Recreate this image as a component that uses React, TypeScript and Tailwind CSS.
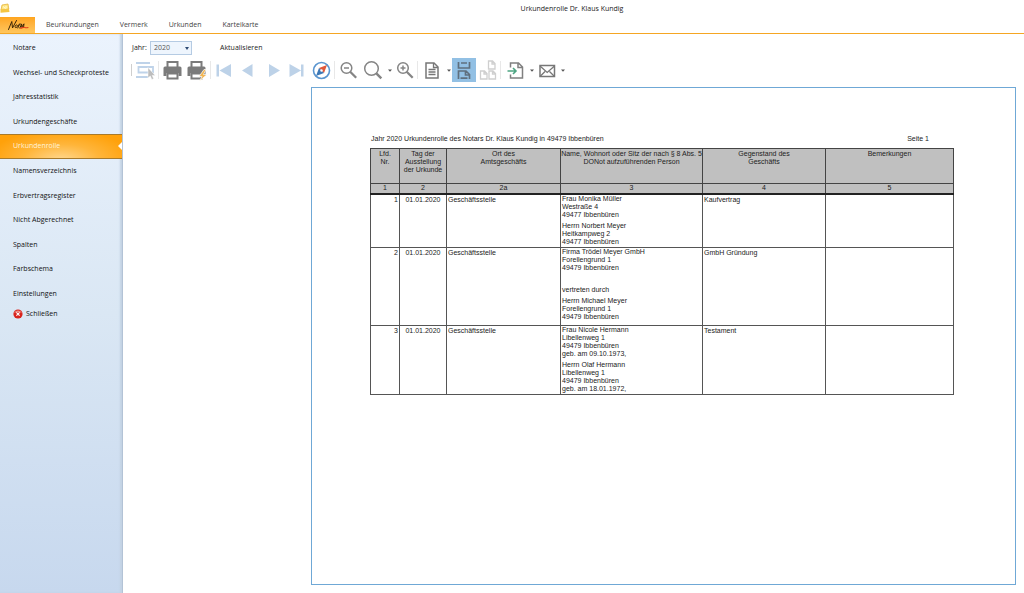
import type { ReactNode } from 'react'

const TABS = ['Beurkundungen', 'Vermerk', 'Urkunden', 'Karteikarte']

const NAV = [
  'Notare',
  'Wechsel- und Scheckproteste',
  'Jahresstatistik',
  'Urkundengeschäfte',
  'Urkundenrolle',
  'Namensverzeichnis',
  'Erbvertragsregister',
  'Nicht Abgerechnet',
  'Spalten',
  'Farbschema',
  'Einstellungen',
]

const COLUMNS = [
  { no: '1', title: ['Lfd.', 'Nr.'] },
  { no: '2', title: ['Tag der', 'Ausstellung', 'der Urkunde'] },
  { no: '2a', title: ['Ort des', 'Amtsgeschäfts'] },
  { no: '3', title: ['Name, Wohnort oder Sitz der nach § 8 Abs. 5', 'DONot aufzuführenden Person'] },
  { no: '4', title: ['Gegenstand des', 'Geschäfts'] },
  { no: '5', title: ['Bemerkungen'] },
]

const ROWS = [
  {
    no: 1,
    date: '01.01.2020',
    place: 'Geschäftsstelle',
    subject: 'Kaufvertrag',
    height: 'h-[54px]',
    persons: [
      ['Frau Monika Müller', 'Westraße 4', '49477 Ibbenbüren'],
      ['Herrn Norbert Meyer', 'Heitkampweg 2', '49477 Ibbenbüren'],
    ],
  },
  {
    no: 2,
    date: '01.01.2020',
    place: 'Geschäftsstelle',
    subject: 'GmbH Gründung',
    height: 'h-[78px]',
    persons: [
      ['Firma Trödel Meyer GmbH', 'Forellengrund 1', '49479 Ibbenbüren'],
      [' '],
      ['vertreten durch'],
      ['Herrn Michael Meyer', 'Forellengrund 1', '49479 Ibbenbüren'],
    ],
  },
  {
    no: 3,
    date: '01.01.2020',
    place: 'Geschäftsstelle',
    subject: 'Testament',
    height: 'h-[69px]',
    persons: [
      ['Frau Nicole Hermann', 'Libellenweg 1', '49479 Ibbenbüren', 'geb. am 09.10.1973,'],
      ['Herrn Olaf Hermann', 'Libellenweg 1', '49479 Ibbenbüren', 'geb. am 18.01.1972,'],
    ],
  },
]

function AppIcon() {
  return (
    <svg width="10" height="11" viewBox="0 0 10 11" className="shrink-0">
      <path d="M2 2L8 1l.8 5L1 7z" fill="#ffe680" stroke="#e5b43c" strokeWidth=".8" />
      <path d="M.5 6.500l8.500-.5.500 3-9 .8z" fill="#f5c542" />
      <path d="M3 3.500l2.500 2M6 3V5.500" stroke="#fffbe6" strokeWidth=".9" />
    </svg>
  )
}

function NormLogo() {
  return (
    <svg width="22" height="12" viewBox="0 0 22 12" fill="none" strokeLinecap="round" strokeLinejoin="round">
      <path
        d="M1.500 10.500L4.800 2.500l.7 6.500L9.500 1.500M8.200 6.800c1-1.700 2.800-1 2 .8-.6 1.400-2.300 1.600-2.200 0M10.800 9l1.500-4M11.800 6.500c.8-1.200 1.500-1.600 2.200-1.500M12.800 9l1.900-4 .1 3.200 2.200-3.400-.5 3.600"
        stroke="#3b2506"
        strokeWidth="1"
      />
      <path d="M13.500 9.200c1.600-.3 3.200-1.200 4-1 .7.200.8.9 3.500.3" stroke="#e2401b" strokeWidth="1.100" />
    </svg>
  )
}

function CloseIcon() {
  return (
    <svg width="10" height="10" viewBox="0 0 10 10" className="shrink-0">
      <circle cx="5" cy="5" r="4.600" fill="#d8231d" />
      <path d="M1.200 4.200a4 4 0 017.600 0c-2-1.600-5.400-1.600-7.600 0z" fill="#f08a80" />
      <path d="M3.400 3.400l3.200 3.200M6.600 3.400L3.400 6.600" stroke="#fff" strokeWidth="1.200" />
    </svg>
  )
}

function Printer() {
  return (
    <>
      <path d="M5.500 9V4h10v5" stroke="#7b7b7b" strokeWidth="2" />
      <path d="M3 8.500h15a1.500 1.500 0 011.500 1.500v8h-3v-3h-12v3h-3v-8A1.500 1.500 0 013 8.500z" fill="#7b7b7b" />
      <path d="M5.500 15.500h10V20.500h-10z" fill="#fff" stroke="#7b7b7b" strokeWidth="2" />
    </>
  )
}

function Separator() {
  return <span className="mr-[3px] h-[18px] w-px bg-[#e8e8e8]" />
}

function Tool({ label, active, children }: { label: string; active?: boolean; children: ReactNode }) {
  return (
    <button aria-label={label} className={active ? 'size-6 bg-[#92c0e4]' : 'size-6'}>
      <svg width="24" height="24" viewBox="0 0 24 24" fill="none">
        {children}
      </svg>
    </button>
  )
}

function Caret({ label }: { label: string }) {
  return (
    <button aria-label={label} className="flex h-6 w-[7px] items-center justify-center">
      <svg width="4" height="3" viewBox="0 0 4 3">
        <path d="M0 .5h4L2 2.800z" fill="#555" />
      </svg>
    </button>
  )
}

function Toolbar() {
  return (
    <div className="flex h-6 items-center pl-2">
      <span className="mr-[2px] h-3 w-px bg-[#cfcfcf]" />
      <Tool label="Auswahl">
        <path d="M2 5h14M4.500 9h14.500v5.500h-14.500zM2 19h12" stroke="#bfd3e9" strokeWidth="1.800" />
        <path d="M14 9.500v10.500l2.300-2 1.500 3.500 1.900-.8-1.500-3.300h3z" fill="#bdbdbd" stroke="#fff" strokeWidth=".5" />
      </Tool>
      <Separator />
      <Tool label="Drucken">
        <Printer />
      </Tool>
      <Tool label="Schnelldruck">
        <Printer />
        <path d="M18 11.500l-5 7h3l-2.500 4.500 7.500-6.500h-3.500l2.500-5z" fill="#f3b653" stroke="#fff" strokeWidth=".7" />
      </Tool>
      <Separator />
      <Tool label="Erste Seite">
        <path d="M2.500 6.500H5v12H2.500zM17 6v13L5.500 12.500z" fill="#bdd2e8" />
      </Tool>
      <Tool label="Vorherige Seite">
        <path d="M14.500 6v13L4 12.500z" fill="#bdd2e8" />
      </Tool>
      <Tool label="Nächste Seite">
        <path d="M7 6v13l11-6.500z" fill="#bdd2e8" />
      </Tool>
      <Tool label="Letzte Seite">
        <path d="M3.500 6v13L15 12.500zM15 6.500h2.500v12H15z" fill="#bdd2e8" />
      </Tool>
      <Tool label="Navigation">
        <circle cx="11.500" cy="12.500" r="8" stroke="#5a95cf" strokeWidth="1.600" />
        <path d="M17 7l-3 8-5-5z" fill="#e0593b" />
        <path d="M6 18l3-8 5 5z" fill="#3d78b5" />
        <circle cx="11.500" cy="12.500" r="1.200" fill="#fff" />
      </Tool>
      <Separator />
      <Tool label="Verkleinern">
        <circle cx="8.500" cy="10" r="5.300" stroke="#858585" strokeWidth="1.500" />
        <path d="M6 10h5" stroke="#858585" strokeWidth="1.500" />
        <path d="M12.200 13.700l6 6" stroke="#858585" strokeWidth="2.300" />
      </Tool>
      <Tool label="Zoom">
        <circle cx="9.500" cy="10.500" r="6.800" stroke="#858585" strokeWidth="1.500" />
        <path d="M14.300 15.300l5 5" stroke="#858585" strokeWidth="2.500" />
      </Tool>
      <Caret label="Zoomstufen" />
      <Tool label="Vergrößern">
        <circle cx="10" cy="10" r="5.300" stroke="#858585" strokeWidth="1.500" />
        <path d="M7.500 10h5M10 7.500v5" stroke="#858585" strokeWidth="1.500" />
        <path d="M13.700 13.700l6 6" stroke="#858585" strokeWidth="2.300" />
      </Tool>
      <Separator />
      <Tool label="Seitenansicht">
        <path d="M5 5h8l4 4v11H5z" stroke="#777" strokeWidth="1.500" />
        <path d="M12.500 5v4.500H17M7.500 11.500h7M7.500 14h7M7.500 16.500h7" stroke="#777" strokeWidth="1.300" />
      </Tool>
      <Caret label="Ansichten" />
      <Tool label="Fortlaufend" active>
        <path d="M6.500 4v6h11V4M9 5h6" stroke="#5f6f7e" strokeWidth="1.700" />
        <path d="M6.500 21v-8h7.500l3.500 3.500V21M13.500 13v4h4M8.500 20.200h7" stroke="#5f6f7e" strokeWidth="1.700" />
      </Tool>
      <Tool label="Mehrere Seiten">
        <path
          d="M12.500 3h4L19 5.500V11h-6.500zM16 3v3h3M4.500 13h4l2.500 2.500V21H4.500zM8 13v3h3M13 13h4l2.500 2.500V21H13zM16.500 13v3h3"
          stroke="#cfcfcf"
          strokeWidth="1.300"
        />
      </Tool>
      <Separator />
      <Tool label="Exportieren">
        <path d="M6.500 9.500V5h8l4 4v11h-12v-3.500M14 5v4.500h4.500" stroke="#808080" strokeWidth="1.500" />
        <path d="M3.500 13H12M9 10l3 3-3 3" stroke="#4ea583" strokeWidth="1.600" />
      </Tool>
      <Caret label="Exportformate" />
      <Tool label="Per E-Mail senden">
        <path d="M5 7.500h14.500v11H5z" stroke="#777" strokeWidth="1.500" />
        <path d="M5 8l7.200 6.500L19.500 8M5 18.500l5-5M19.500 18.500l-5-5" stroke="#777" strokeWidth="1.300" />
      </Tool>
      <Caret label="E-Mail-Optionen" />
    </div>
  )
}

function Sidebar() {
  return (
    <aside className="w-[123px] shrink-0 border-r border-[#b3c3d6] bg-linear-to-b from-[#ebf3fd] via-[#dae7f4] to-[#c7d8ee] pt-[2px] text-[#111] shadow-[inset_-2px_0_2px_#c3d2e3]">
      <nav className="grid h-[270px] auto-rows-fr">
        {NAV.map((item) =>
          item === 'Urkundenrolle' ? (
            <a
              key={item}
              href="#"
              aria-current="page"
              className="relative flex items-center border-y border-[#a87a2a] bg-[radial-gradient(ellipse_at_50%_110%,#ffd890,#ffb53a_45%,#ffa10a_85%)] pl-[13px] text-[#fff3d8]"
            >
              {item}
              <svg width="4" height="8" viewBox="0 0 4 8" className="absolute right-0">
                <path d="M4 0v8L0 4z" fill="#fff" />
              </svg>
            </a>
          ) : (
            <a key={item} href="#" className="flex items-center pl-[13px] whitespace-nowrap">
              {item}
            </a>
          ),
        )}
      </nav>
      <button className="flex h-4 items-center gap-[3px] pl-[13px]">
        <CloseIcon />
        Schließen
      </button>
    </aside>
  )
}

function Report() {
  return (
    <article className="mt-[5px] mr-2 mb-2 ml-[188px] flex-1 border border-[#6fa8d6] bg-white pt-[47px] pr-[61px] pl-[58px] font-['Liberation_Sans',Arial,sans-serif] text-[7px] leading-2 text-[#222]">
      <div className="flex justify-between pr-[25px] pb-[5px] pl-px">
        <h1>Jahr 2020 Urkundenrolle des Notars Dr. Klaus Kundig in 49479 Ibbenbüren</h1>
        <span>Seite 1</span>
      </div>
      <table className="w-full table-fixed border-collapse border border-[#444]">
        <colgroup>
          <col className="w-[29px]" />
          <col className="w-[47px]" />
          <col className="w-[114px]" />
          <col className="w-[142px]" />
          <col className="w-[123px]" />
          <col />
        </colgroup>
        <thead className="bg-[#c0c0c0]">
          <tr className="h-[35px]">
            {COLUMNS.map((col) => (
              <th key={col.no} className="border border-[#444] p-0 pt-px align-top font-normal whitespace-nowrap">
                {col.title.map((line) => (
                  <div key={line}>{line}</div>
                ))}
              </th>
            ))}
          </tr>
          <tr className="h-[10px] border-b-2 border-[#222]">
            {COLUMNS.map((col) => (
              <th key={col.no} className="border-x border-[#444] p-0 font-normal">
                {col.no}
              </th>
            ))}
          </tr>
        </thead>
        <tbody>
          {ROWS.map((row) => (
            <tr key={row.no} className={`${row.height} align-top [&>td]:border [&>td]:border-[#555] [&>td]:px-px`}>
              <td className="pt-px text-right">{row.no}</td>
              <td className="pt-px text-center">{row.date}</td>
              <td className="pt-px">{row.place}</td>
              <td>
                <div className="flex flex-col gap-[3px]">
                  {row.persons.map((lines) => (
                    <div key={lines[0]}>
                      {lines.map((line) => (
                        <p key={line} className="whitespace-pre">
                          {line}
                        </p>
                      ))}
                    </div>
                  ))}
                </div>
              </td>
              <td className="pt-px">{row.subject}</td>
              <td />
            </tr>
          ))}
        </tbody>
      </table>
    </article>
  )
}

export default function App() {
  return (
    <div className="flex min-h-screen flex-col bg-white font-['Open_Sans','Noto_Sans',sans-serif] text-[7px] leading-3 text-[#222]">
      <header className="flex h-[17px] items-center">
        <AppIcon />
        <p className="flex-1 pl-[110px] text-center">Urkundenrolle Dr. Klaus Kundig</p>
      </header>
      <nav className="flex h-[17px] items-stretch border-b border-[#f5a623] text-[#444]">
        <button aria-label="Norm" className="flex w-[35px] items-center justify-center bg-linear-to-b from-[#ffa51c] to-[#ffc65c]">
          <NormLogo />
        </button>
        <div className="flex items-center gap-[21px] pl-[11px]">
          {TABS.map((tab) => (
            <a key={tab} href="#">
              {tab}
            </a>
          ))}
        </div>
      </nav>
      <div className="flex flex-1">
        <Sidebar />
        <main className="flex min-w-0 flex-1 flex-col">
          <div className="flex h-6 items-center pt-1 pl-[9px]">
            <label htmlFor="jahr" className="w-[18px]">
              Jahr:
            </label>
            <div className="relative flex">
              <select
                id="jahr"
                className="h-[14px] w-[42px] appearance-none border border-[#b5cbe3] bg-[#eef5fd] pl-[3px] leading-3 text-[#555]"
              >
                <option>2020</option>
              </select>
              <svg width="4" height="3" viewBox="0 0 4 3" className="pointer-events-none absolute top-[6px] right-[3px]">
                <path d="M0 0h4L2 3z" fill="#2d4a73" />
              </svg>
            </div>
            <button className="ml-7">Aktualisieren</button>
          </div>
          <Toolbar />
          <Report />
        </main>
      </div>
    </div>
  )
}
